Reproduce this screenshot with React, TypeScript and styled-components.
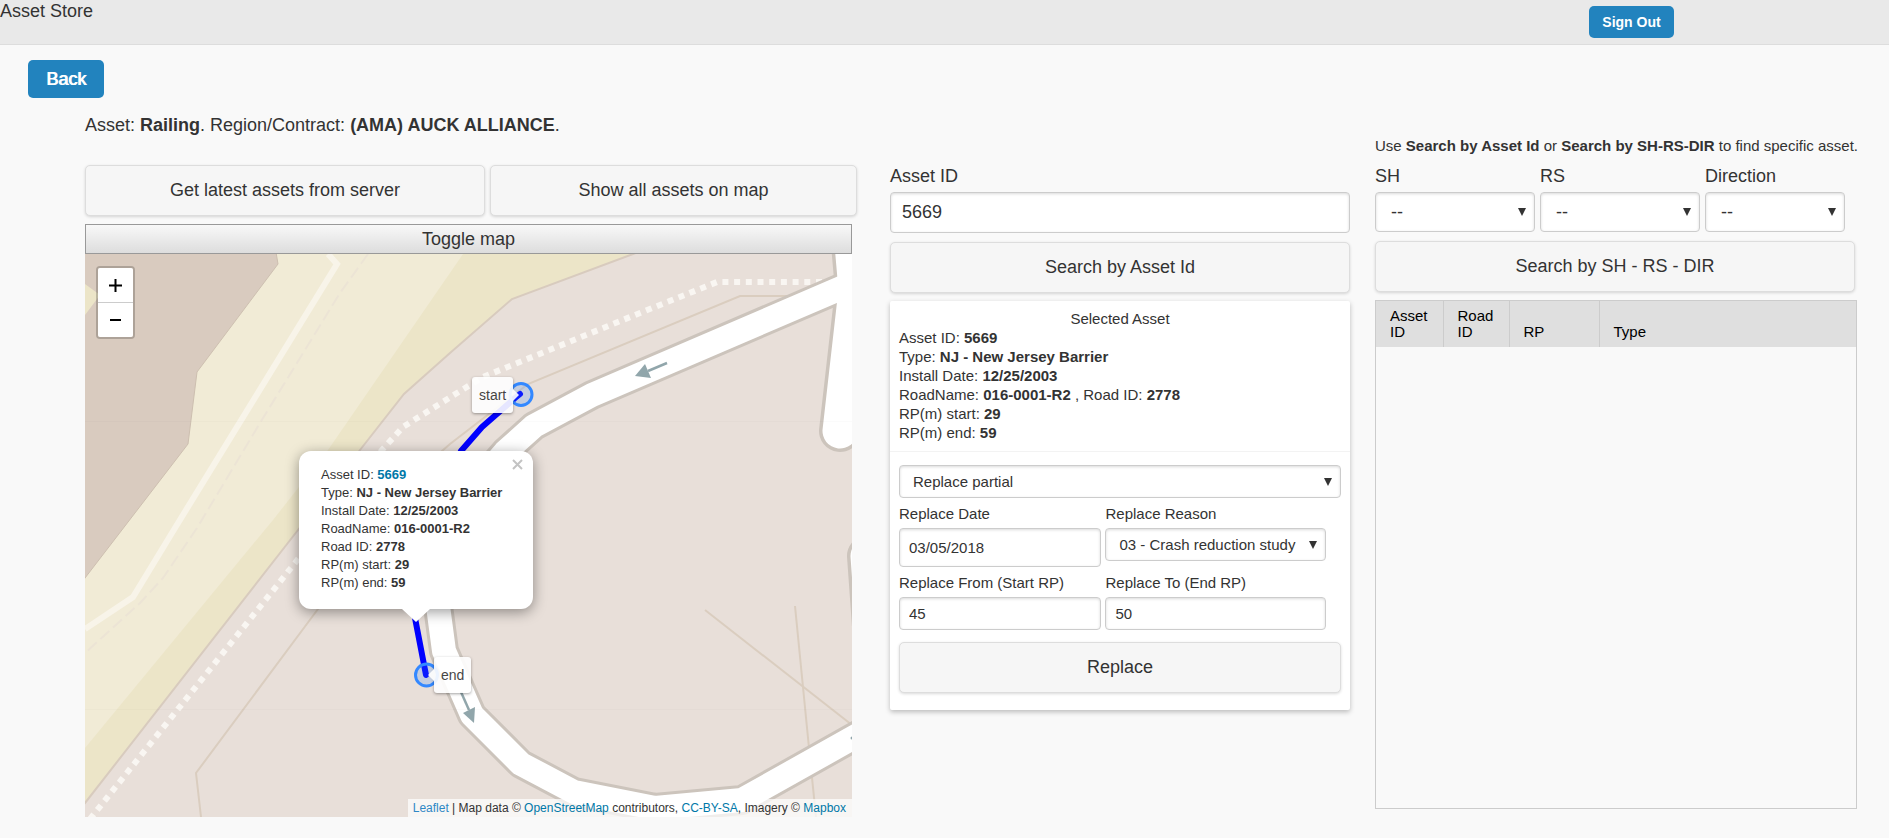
import React from "react";
import styled, { createGlobalStyle, css } from "styled-components";

const GlobalStyle = createGlobalStyle`
  *, *::before, *::after { box-sizing: border-box; }
  body {
    margin: 0;
    background: #f9f9f9;
    color: #333;
    font-family: "Liberation Sans", Arial, Helvetica, sans-serif;
    font-size: 18px;
    line-height: 24px;
  }
  button, input, select { font-family: inherit; color: inherit; margin: 0; }
  a { color: #0078a8; text-decoration: none; }
`;

const Header = styled.header`
  display: flex;
  justify-content: space-between;
  align-items: flex-start;
  height: 45px;
  padding: 0 215px 0 0;
  background: #e9e9e9;
  border-bottom: 1px solid #ddd;
`;

const Title = styled.h1`
  margin: 0;
  font-size: 18px;
  font-weight: 400;
  line-height: 22px;
`;

const PrimaryButton = styled.button<{ $small?: boolean }>`
  border: 0;
  border-radius: 5px;
  background: #2283be;
  color: #fff;
  cursor: pointer;
  ${({ $small }) =>
    $small
      ? css`
          width: 85px;
          height: 32px;
          margin-top: 6px;
          font-size: 14px;
          font-weight: 700;
        `
      : css`
          width: 76px;
          height: 38px;
          font-size: 18px;
          text-shadow: 1px 0 0 #fff;
        `}
`;

const BackBar = styled.nav`
  padding: 15px 28px 0;
  display: flex;
`;

const Main = styled.main`
  display: grid;
  grid-template-columns: minmax(0, 805fr) minmax(0, 485fr) minmax(0, 482fr);
  padding: 14px 32px 20px 85px;
`;

const MapColumn = styled.section`
  padding: 1px 33px 0 0;
`;

const SearchColumn = styled.section`
  padding: 52px 25px 0 0;
`;

const ResultColumn = styled.section`
  padding-top: 24px;
`;

const AssetLine = styled.p`
  margin: 0 0 28px;
  line-height: 24px;
`;

const ButtonPair = styled.div`
  display: grid;
  grid-template-columns: minmax(0, 400fr) minmax(0, 367fr);
  gap: 5px;
`;

const WideButton = styled.button`
  display: block;
  width: 100%;
  height: 51px;
  border: 1px solid #ddd;
  border-radius: 5px;
  background: #f6f6f6;
  box-shadow: 0 1px 3px rgba(0, 0, 0, 0.15);
  font-size: 18px;
  cursor: pointer;
`;

const MapPanel = styled.div`
  margin: 8px 5px 0 0;
`;

const ToggleButton = styled.button`
  display: block;
  width: 100%;
  height: 30px;
  padding: 0;
  border: 1px solid #999;
  background: linear-gradient(#f8f8f8, #ddd);
  font-size: 18px;
  cursor: pointer;
`;

const MapCanvas = styled.div`
  position: relative;
  height: 563px;
  overflow: hidden;
  background: #e8dfd9;
`;

const MapDrawing = styled.svg`
  display: block;
  width: 100%;
  height: 100%;
`;

const ZoomControl = styled.div`
  position: absolute;
  top: 12px;
  left: 11px;
  width: 39px;
  border: 2px solid rgba(0, 0, 0, 0.2);
  border-radius: 4px;
  background-clip: padding-box;
`;

const ZoomButton = styled.button`
  display: flex;
  align-items: center;
  justify-content: center;
  width: 100%;
  height: 34px;
  padding: 0;
  border: 0;
  background: #fff;
  cursor: pointer;
  &:first-child {
    height: 35px;
    border-bottom: 1px solid #ccc;
    border-radius: 2px 2px 0 0;
  }
  &:last-child { border-radius: 0 0 2px 2px; }
`;

const Tooltip = styled.div<{ $side: "left" | "right" }>`
  position: absolute;
  padding: 6px 7px;
  border-radius: 3px;
  background: #fff;
  box-shadow: 0 1px 3px rgba(0, 0, 0, 0.4);
  color: #333;
  font-size: 14px;
  line-height: 24px;
  opacity: 0.9;
  ${({ $side }) =>
    $side === "left"
      ? css`top: 123px; left: 387px;`
      : css`top: 403px; left: 349px;`}
  &::before {
    content: "";
    position: absolute;
    top: 12px;
    border: 6px solid transparent;
    ${({ $side }) =>
      $side === "left"
        ? css`left: 100%; border-left-color: #fff;`
        : css`right: 100%; border-right-color: #fff;`}
  }
`;

const Popup = styled.div`
  position: absolute;
  top: 197px;
  left: 214px;
  width: 234px;
  padding: 15px 20px 17px 22px;
  border-radius: 12px;
  background: #fff;
  box-shadow: 0 3px 14px rgba(0, 0, 0, 0.4);
  font-size: 13px;
  line-height: 18px;
  white-space: nowrap;
  &::after {
    content: "";
    position: absolute;
    top: 100%;
    left: 103px;
    border: solid transparent;
    border-width: 13px 14px 0;
    border-top-color: #fff;
  }
`;

const PopupClose = styled.button`
  position: absolute;
  top: 6px;
  right: 8px;
  display: flex;
  padding: 2px;
  border: 0;
  background: none;
  color: #c3c3c3;
  cursor: pointer;
`;

const Attribution = styled.div`
  position: absolute;
  right: 0;
  bottom: 0;
  padding: 0 6px 0 5px;
  background: rgba(255, 255, 255, 0.7);
  font-size: 12px;
  line-height: 18px;
  & > a:first-child { color: #2f88c6; }
`;

const Label = styled.label<{ $small?: boolean }>`
  display: block;
  font-size: ${({ $small }) => ($small ? 15 : 18)}px;
  line-height: ${({ $small }) => ($small ? 20 : 24)}px;
`;

const TextInput = styled.input<{ $height: number; $small?: boolean }>`
  display: block;
  width: 100%;
  height: ${({ $height }) => $height}px;
  padding: 0 ${({ $small }) => ($small ? 9 : 11)}px;
  border: 1px solid #ccc;
  border-radius: 4px;
  background: #fff;
  box-shadow: inset 0 1px 3px rgba(0, 0, 0, 0.15);
  font-size: ${({ $small }) => ($small ? 15 : 18)}px;
`;

const SelectBox = styled.div`
  position: relative;
  &::after {
    content: "";
    position: absolute;
    top: calc(50% - 4px);
    right: 9px;
    border: solid transparent;
    border-width: 8px 4px 0;
    border-top-color: #333;
    pointer-events: none;
  }
`;

const Select = styled.select<{ $height: number; $small?: boolean }>`
  display: block;
  width: 100%;
  height: ${({ $height }) => $height}px;
  padding: 0 24px 0 ${({ $small }) => ($small ? 13 : 15)}px;
  appearance: none;
  border: 1px solid #ccc;
  border-radius: 4px;
  background: #fff;
  box-shadow: inset 0 1px 3px rgba(0, 0, 0, 0.15);
  font-size: ${({ $small }) => ($small ? 15 : 18)}px;
`;

const AssetSearch = styled.form`
  display: grid;
  margin-bottom: 8px;
  & > label { margin-bottom: 4px; }
  & > input { margin-bottom: 9px; }
`;

const Card = styled.div`
  border-radius: 2px;
  background: #fff;
  box-shadow: 0 2px 5px rgba(0, 0, 0, 0.25);
  font-size: 15px;
`;

const AssetSummary = styled.div`
  padding: 8px 9px 9px;
  border-bottom: 1px solid #f3f3f3;
  line-height: 19px;
`;

const SummaryTitle = styled.h2`
  margin: 0;
  font-size: 15px;
  font-weight: 400;
  text-align: center;
`;

const ReplaceForm = styled.form`
  padding: 13px 9px 17px;
`;

const FieldGrid = styled.div`
  display: grid;
  grid-template-columns: minmax(0, 202fr) minmax(0, 220fr);
  column-gap: 4px;
  row-gap: 6px;
  align-items: start;
  margin: 6px 15px 12px 0;
`;

const Field = styled.div`
  & > label { margin-bottom: 4px; }
`;

const Hint = styled.p`
  margin: 0 0 8px;
  font-size: 15px;
  line-height: 20px;
  white-space: nowrap;
`;

const RoadSearch = styled.form`
  display: grid;
  margin: 0 2px 8px 0;
`;

const RoadFields = styled.div`
  display: grid;
  grid-template-columns: minmax(0, 160fr) minmax(0, 160fr) minmax(0, 140fr);
  gap: 5px;
  margin: 0 10px 9px 0;
  & label { margin-bottom: 4px; }
`;

const TableFrame = styled.div`
  min-height: 509px;
  border: 1px solid #ccc;
`;

const ResultTable = styled.table`
  width: 100%;
  table-layout: fixed;
  border-collapse: collapse;
  color: #000;
  font-size: 15px;
  line-height: 16px;
`;

const HeadCell = styled.th<{ $width?: string }>`
  width: ${({ $width }) => $width ?? "auto"};
  height: 46px;
  padding: 7px 8px 7px 14px;
  background: #dfdfdf;
  font-weight: 400;
  text-align: left;
  vertical-align: bottom;
  & + & { border-left: 1px solid #ccc; }
`;

type Row = { label: string; value: string; link?: boolean };

const popupRows: Row[] = [
  { label: "Asset ID", value: "5669", link: true },
  { label: "Type", value: "NJ - New Jersey Barrier" },
  { label: "Install Date", value: "12/25/2003" },
  { label: "RoadName", value: "016-0001-R2" },
  { label: "Road ID", value: "2778" },
  { label: "RP(m) start", value: "29" },
  { label: "RP(m) end", value: "59" },
];

const loopRoad =
  "M775 26 L507 141 L449 172 L420 198 L375 250 L353 310 L353 352 L359 397 L387 461 L436 510 L489 538 L570 554 L657 546 L780 477";
const accessRoad = "M767 -10 L771 36 L755 177";
const sideRoad = "M783 302 L790 400";

function StreetMap() {
  return (
    <MapDrawing viewBox="0 0 767 563" preserveAspectRatio="xMinYMin slice" role="img" aria-label="Street map of the asset">
      <rect width="767" height="563" fill="#e8dfd9" />
      <path
        d="M-5 -5H561L548 0L427 45L365 99L319 140L275 196L213 276L0 549L-5 555Z"
        fill="#ece5c8"
        stroke="#d8cbbe"
        strokeWidth="2"
      />
      <path d="M0 0H378L243 196L188 266L0 494Z" fill="#f1ebd6" />
      <path d="M-2 -2H191L193 10L112 118L103 190L0 324L-2 327Z" fill="#d9cbbf" stroke="#cdbfb0" strokeWidth="1" />
      <path d="M0 30L15 41L0 61Z" fill="#ece5c8" />
      <path d="M243 0L252 10L90 274L48 343L0 375" fill="none" stroke="#f8f4e9" strokeWidth="6" />
      <path
        d="M283 0L255 39L175 169L112 274L78 324L55 349L0 399"
        fill="none"
        stroke="#ece4d5"
        strokeWidth="2"
        strokeDasharray="12 5"
      />
      <g fill="none" stroke="#dacdbf" strokeWidth="2">
        <path d="M712 42H655L443 130L365 190L357 197L233 355L111 519L116 563" />
        <path d="M620 356L767 471" />
        <path d="M710 352L724 494L731 563" />
      </g>
      <path
        d="M737 28H632L555 59L398 123L372 139L318 173L297 196L210 309L5 565"
        fill="none"
        stroke="#f9f6f2"
        strokeWidth="6"
        strokeDasharray="6 5.7"
      />
      <g fill="none" stroke="#ccc4bc" strokeLinecap="round" strokeLinejoin="round">
        <path d={loopRoad} strokeWidth="30" />
        <path d={accessRoad} strokeWidth="42" />
        <path d={sideRoad} strokeWidth="42" />
      </g>
      <g fill="none" stroke="#fff" strokeLinecap="round" strokeLinejoin="round">
        <path d={loopRoad} strokeWidth="24" />
        <path d={accessRoad} strokeWidth="35" />
        <path d={sideRoad} strokeWidth="35" />
      </g>
      <g stroke="#91a6ab" strokeWidth="2.5" fill="#91a6ab">
        <path d="M582 109L563 117" />
        <path d="M550 122L560 110L566 124Z" stroke="none" />
        <path d="M376 438L384 456" />
        <path d="M389 469L378 459L390 453Z" stroke="none" />
        <circle cx="767" cy="484" r="1.500" stroke="none" />
      </g>
      <path d="M0 167.5H767M0 455.5H767" stroke="#000" strokeOpacity="0.015" />
      <path
        d="M435 140L430 144L397 173L376 197L345 260L330 330L330 364L341 421"
        fill="none"
        stroke="#00f"
        strokeWidth="6"
        strokeLinecap="round"
        strokeLinejoin="round"
      />
      <g fill="#3388ff" fillOpacity="0.2" stroke="#3388ff" strokeWidth="3">
        <circle cx="436" cy="140.500" r="11" />
        <circle cx="341.500" cy="421" r="11" />
      </g>
    </MapDrawing>
  );
}

function RoadSelect({ id, label }: { id: string; label: string }) {
  return (
    <div>
      <Label htmlFor={id}>{label}</Label>
      <SelectBox>
        <Select id={id} $height={40} defaultValue="--">
          <option>--</option>
        </Select>
      </SelectBox>
    </div>
  );
}

export default function App() {
  return (
    <>
      <GlobalStyle />
      <Header>
        <Title>Asset Store</Title>
        <PrimaryButton type="button" $small>Sign Out</PrimaryButton>
      </Header>
      <BackBar>
        <PrimaryButton type="button">Back</PrimaryButton>
      </BackBar>
      <Main>
        <MapColumn>
          <AssetLine>
            Asset: <b>Railing</b>. Region/Contract: <b>(AMA) AUCK ALLIANCE</b>.
          </AssetLine>
          <ButtonPair>
            <WideButton type="button">Get latest assets from server</WideButton>
            <WideButton type="button">Show all assets on map</WideButton>
          </ButtonPair>
          <MapPanel>
            <ToggleButton type="button">Toggle map</ToggleButton>
            <MapCanvas>
              <StreetMap />
              <ZoomControl>
                <ZoomButton type="button" aria-label="Zoom in">
                  <svg width="13" height="13" viewBox="0 0 13 13">
                    <path d="M0 6.500H13M6.500 0V13" stroke="#000" strokeWidth="2" />
                  </svg>
                </ZoomButton>
                <ZoomButton type="button" aria-label="Zoom out">
                  <svg width="11" height="2" viewBox="0 0 11 2">
                    <path d="M0 1H11" stroke="#000" strokeWidth="2" />
                  </svg>
                </ZoomButton>
              </ZoomControl>
              <Tooltip $side="left">start</Tooltip>
              <Tooltip $side="right">end</Tooltip>
              <Popup>
                {popupRows.map((row) => (
                  <div key={row.label}>
                    {row.label}: <b>{row.link ? <a href="#asset">{row.value}</a> : row.value}</b>
                  </div>
                ))}
                <PopupClose type="button" aria-label="Close popup">
                  <svg width="11" height="11" viewBox="0 0 11 11">
                    <path d="M1 1L10 10M10 1L1 10" stroke="currentColor" strokeWidth="2" />
                  </svg>
                </PopupClose>
              </Popup>
              <Attribution>
                <a href="#leaflet">Leaflet</a> | Map data © <a href="#osm">OpenStreetMap</a> contributors,{" "}
                <a href="#license">CC-BY-SA</a>, Imagery © <a href="#mapbox">Mapbox</a>
              </Attribution>
            </MapCanvas>
          </MapPanel>
        </MapColumn>

        <SearchColumn>
          <AssetSearch>
            <Label htmlFor="asset-id">Asset ID</Label>
            <TextInput id="asset-id" $height={41} defaultValue="5669" />
            <WideButton type="button">Search by Asset Id</WideButton>
          </AssetSearch>
          <Card>
            <AssetSummary>
              <SummaryTitle>Selected Asset</SummaryTitle>
              <div>Asset ID: <b>5669</b></div>
              <div>Type: <b>NJ - New Jersey Barrier</b></div>
              <div>Install Date: <b>12/25/2003</b></div>
              <div>RoadName: <b>016-0001-R2</b> , Road ID: <b>2778</b></div>
              <div>RP(m) start: <b>29</b></div>
              <div>RP(m) end: <b>59</b></div>
            </AssetSummary>
            <ReplaceForm>
              <SelectBox>
                <Select $height={33} $small aria-label="Replace action" defaultValue="Replace partial">
                  <option>Replace partial</option>
                </Select>
              </SelectBox>
              <FieldGrid>
                <Field>
                  <Label $small htmlFor="replace-date">Replace Date</Label>
                  <TextInput id="replace-date" $height={39} $small defaultValue="03/05/2018" />
                </Field>
                <Field>
                  <Label $small htmlFor="replace-reason">Replace Reason</Label>
                  <SelectBox>
                    <Select id="replace-reason" $height={33} $small defaultValue="03 - Crash reduction study">
                      <option>03 - Crash reduction study</option>
                    </Select>
                  </SelectBox>
                </Field>
                <Field>
                  <Label $small htmlFor="replace-from">Replace From (Start RP)</Label>
                  <TextInput id="replace-from" $height={33} $small defaultValue="45" />
                </Field>
                <Field>
                  <Label $small htmlFor="replace-to">Replace To (End RP)</Label>
                  <TextInput id="replace-to" $height={33} $small defaultValue="50" />
                </Field>
              </FieldGrid>
              <WideButton type="button">Replace</WideButton>
            </ReplaceForm>
          </Card>
        </SearchColumn>

        <ResultColumn>
          <Hint>
            Use <b>Search by Asset Id</b> or <b>Search by SH-RS-DIR</b> to find specific asset.
          </Hint>
          <RoadSearch>
            <RoadFields>
              <RoadSelect id="sh" label="SH" />
              <RoadSelect id="rs" label="RS" />
              <RoadSelect id="direction" label="Direction" />
            </RoadFields>
            <WideButton type="button">Search by SH - RS - DIR</WideButton>
          </RoadSearch>
          <TableFrame>
            <ResultTable>
              <thead>
                <tr>
                  <HeadCell scope="col" $width="67px">Asset ID</HeadCell>
                  <HeadCell scope="col" $width="66px">Road ID</HeadCell>
                  <HeadCell scope="col" $width="90px">RP</HeadCell>
                  <HeadCell scope="col">Type</HeadCell>
                </tr>
              </thead>
            </ResultTable>
          </TableFrame>
        </ResultColumn>
      </Main>
    </>
  );
}
